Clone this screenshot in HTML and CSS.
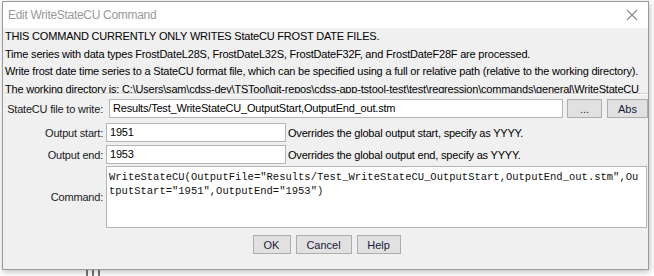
FILE: index.html
```html
<!DOCTYPE html>
<html lang="en">
<head>
    <meta charset="UTF-8">
    <title>Edit WriteStateCU Command</title>
    <link rel="stylesheet" href="styles.css">
</head>
<body>

    <div class="backdrop">
        <div class="under-lines"><span></span><span></span><span></span></div>
    </div>

    <div id="dialog">
        <div class="titlebar">
            <span class="title">Edit WriteStateCU Command</span>
            <svg class="close" width="12" height="12" viewBox="0 0 12 12">
                <path d="M1 1 L11 11 M11 1 L1 11" stroke="#8a8a8a" stroke-width="1.1" fill="none"/>
            </svg>
        </div>

        <div class="content">
            <div class="info">
                <div>THIS COMMAND CURRENTLY ONLY WRITES StateCU FROST DATE FILES.</div>
                <div>Time series with data types FrostDateL28S, FrostDateL32S, FrostDateF32F, and FrostDateF28F are processed.</div>
                <div>Write frost date time series to a StateCU format file, which can be specified using a full or relative path (relative to the working directory).</div>
                <div>The working directory is: C:\Users\sam\cdss-dev\TSTool\git-repos\cdss-app-tstool-test\test\regression\commands\general\WriteStateCU</div>
            </div>

            <div class="separator"></div>

            <div class="row row-file">
                <label class="label label-file">StateCU file to write:</label>
                <div class="field field-file">Results/Test_WriteStateCU_OutputStart,OutputEnd_out.stm</div>
                <button class="btn btn-browse">...</button>
                <button class="btn btn-abs">Abs</button>
            </div>

            <div class="row row-start">
                <label class="label">Output start:</label>
                <div class="field field-short">1951</div>
                <span class="note">Overrides the global output start, specify as YYYY.</span>
            </div>

            <div class="row row-end">
                <label class="label">Output end:</label>
                <div class="field field-short">1953</div>
                <span class="note">Overrides the global output end, specify as YYYY.</span>
            </div>

            <div class="row row-command">
                <label class="label label-command">Command:</label>
                <div class="command">WriteStateCU(OutputFile="Results/Test_WriteStateCU_OutputStart,OutputEnd_out.stm",OutputStart="1951",OutputEnd="1953")</div>
            </div>

            <div class="buttons">
                <button class="btn btn-ok">OK</button>
                <button class="btn btn-cancel">Cancel</button>
                <button class="btn btn-help">Help</button>
            </div>
        </div>
    </div>

</body>
</html>
```

FILE: styles.css
```css
body {
    margin: 0;
    width: 654px;
    height: 276px;
    background-color: #ffffff;
    font-family: "Liberation Sans", Arial, sans-serif;
    font-size: 11px;
    letter-spacing: -0.2px;
    color: #000000;
    position: relative;
    overflow: hidden;
}
.backdrop {
    position: absolute;
    left: 0;
    top: 0;
    width: 654px;
    height: 276px;
}
.under-lines {
    position: absolute;
    left: 86px;
    top: 268px;
    display: flex;
    gap: 4px;
}
.under-lines span {
    width: 2px;
    height: 8px;
    background-color: #777;
}
#dialog {
    position: absolute;
    left: 2px;
    top: 1px;
    width: 645px;
    height: 267px;
    border: 1px solid #9a9a9a;
    background-color: #f0f0f0;
    box-shadow: 1px 2px 6px rgba(0, 0, 0, 0.25);
    display: flex;
    flex-direction: column;
}
.titlebar {
    height: 26px;
    background-color: #ffffff;
    display: flex;
    align-items: center;
    justify-content: space-between;
    padding: 0 10px 0 5px;
    flex-shrink: 0;
}
.title {
    font-size: 12px;
    letter-spacing: -0.3px;
    color: #9a9a9a;
}
.close {
    display: block;
}
.content {
    display: flex;
    flex-direction: column;
    padding: 0 0 0 2px;
}
.info {
    line-height: 17.5px;
    white-space: nowrap;
    margin-bottom: -5px;
}
.separator {
    height: 1px;
    background-color: #d3d3d3;
    border-bottom: 1px solid #ffffff;
}
.row {
    display: flex;
    align-items: center;
}
.label {
    width: 98px;
    text-align: right;
    padding-right: 3px;
    color: #1a1a1a;
    white-space: nowrap;
    flex-shrink: 0;
}
.label-file {
    padding-right: 6px;
}
.field {
    height: 17px;
    line-height: 17px;
    background-color: #ffffff;
    border: 1px solid #b5b5b5;
    padding: 0 3px;
    white-space: nowrap;
    overflow: hidden;
}
.row-file {
    margin-top: 4px;
}
.field-file {
    width: 446px;
}
.btn {
    font-family: "Liberation Sans", Arial, sans-serif;
    font-size: 11px;
    color: #1a1a3a;
    background-color: #e1e1e1;
    border: 1px solid #adadad;
    height: 19px;
    padding: 0;
    line-height: 16px;
}
.btn-browse {
    width: 35px;
    margin-left: 4px;
}
.btn-abs {
    width: 41px;
    margin-left: 5px;
}
.row-start {
    margin-top: 5px;
}
.row-end {
    margin-top: 3px;
}
.field-short {
    width: 172px;
}
.note {
    margin-left: 2px;
    white-space: nowrap;
}
.row-command {
    margin-top: 2px;
}
.command {
    width: 535px;
    height: 54px;
    background-color: #ffffff;
    border: 1px solid #b5b5b5;
    padding: 3px 2px;
    font-family: "Liberation Mono", monospace;
    font-size: 10.5px;
    letter-spacing: 0;
    line-height: 14px;
    word-break: break-all;
    color: #111;
}
.buttons {
    display: flex;
    justify-content: center;
    gap: 5px;
    margin-top: 7px;
}
.btn-ok {
    width: 38px;
}
.btn-cancel {
    width: 56px;
}
.btn-help {
    width: 44px;
}
```
